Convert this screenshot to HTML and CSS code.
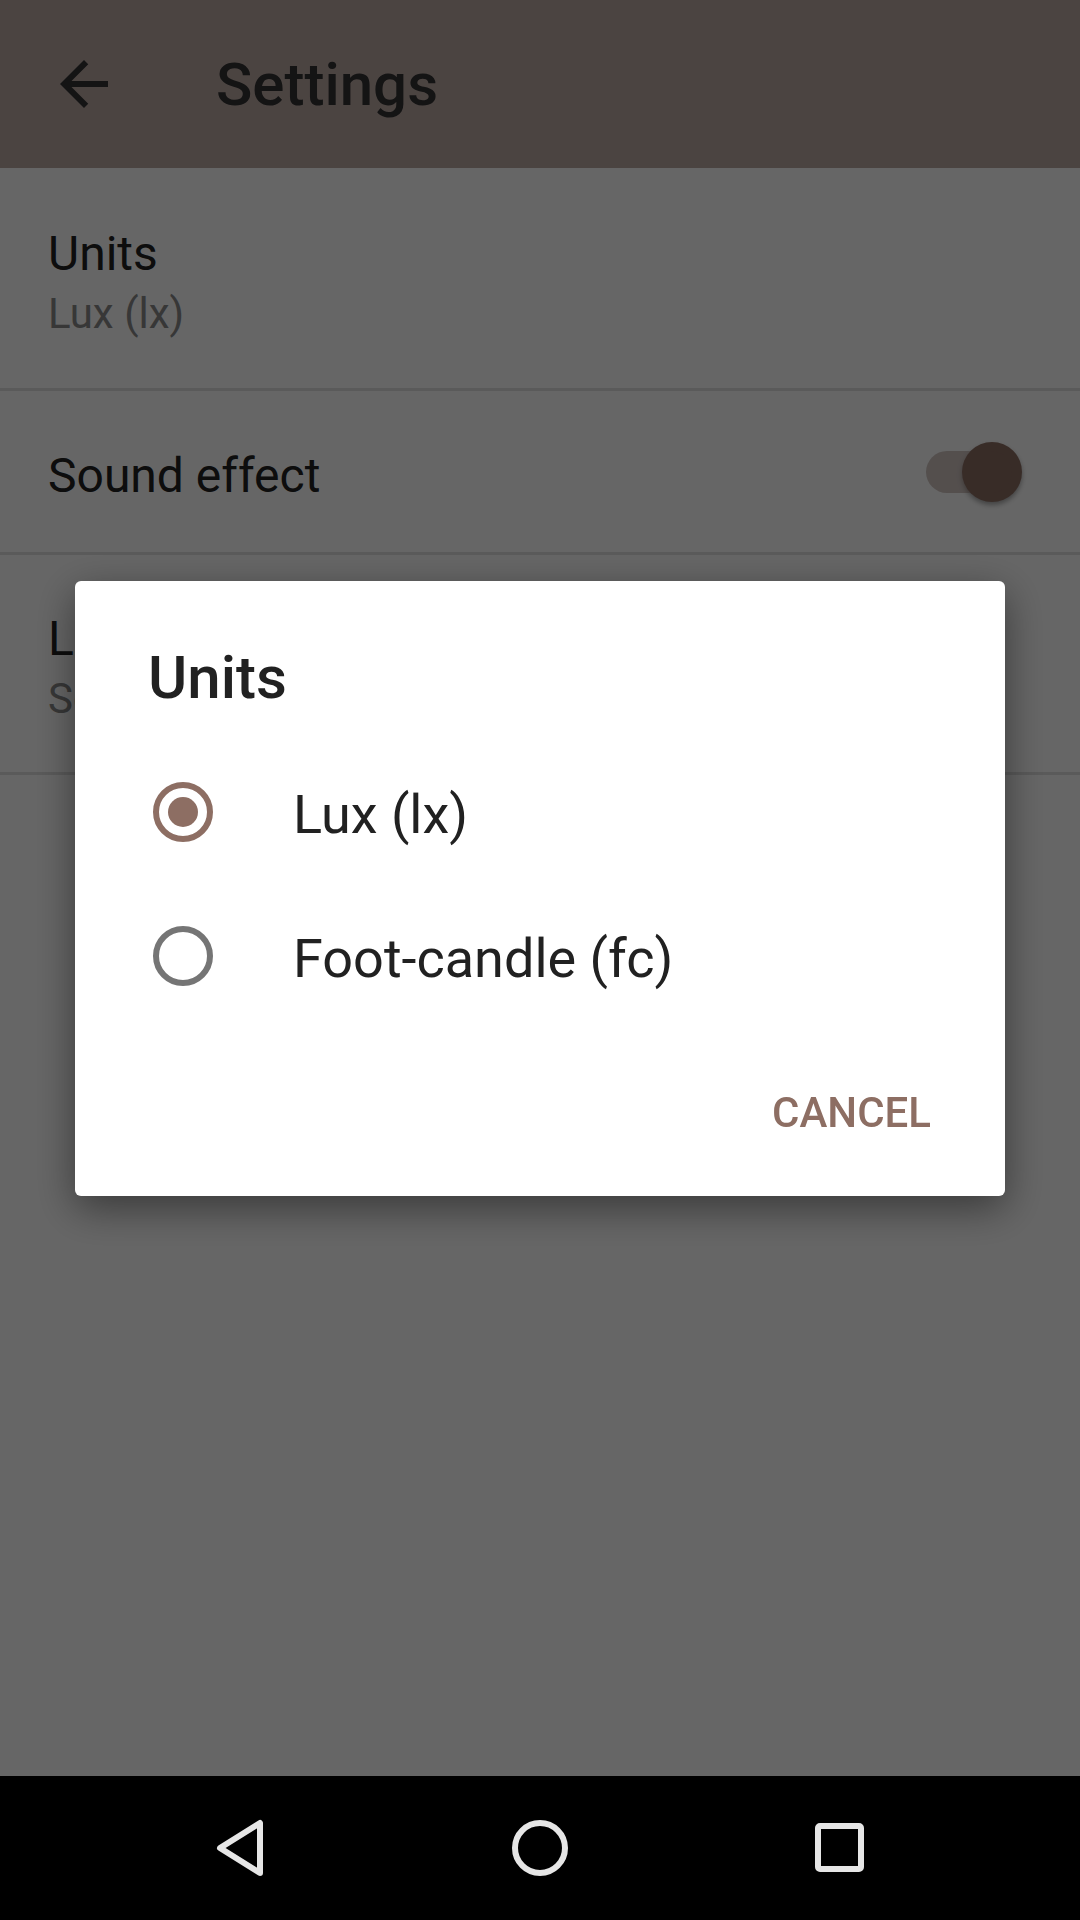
FILE: index.html
```html
<!DOCTYPE html>
<html lang="en">
<head>
    <meta charset="UTF-8">
    <meta name="viewport" content="width=device-width, initial-scale=1.0">
    <title>Settings</title>
    <link rel="stylesheet" href="styles.css">
</head>
<body>
    <div class="screen">
        <header class="appbar">
            <svg class="appbar-back" viewBox="0 0 24 24"><path d="M20 11H7.83l5.59-5.59L12 4l-8 8 8 8 1.41-1.41L7.83 13H20v-2z"/></svg>
            <h1 class="appbar-title">Settings</h1>
        </header>
        <main class="prefs">
            <div class="pref pref-units">
                <div class="pref-title">Units</div>
                <div class="pref-summary">Lux (lx)</div>
            </div>
            <div class="pref pref-sound">
                <div class="pref-title">Sound effect</div>
                <div class="switch">
                    <span class="switch-track"></span>
                    <span class="switch-thumb"></span>
                </div>
            </div>
            <div class="pref pref-light">
                <div class="pref-title">Light sensor</div>
                <div class="pref-summary">Sensor default</div>
            </div>
        </main>
        <nav class="navbar">
            <div class="navbar-item">
                <svg viewBox="0 0 72 72"><path d="M16 36 L56 11 L56 61 Z"/></svg>
            </div>
            <div class="navbar-item">
                <svg viewBox="0 0 72 72"><circle cx="36" cy="36" r="25"/></svg>
            </div>
            <div class="navbar-item">
                <svg viewBox="0 0 72 72"><rect x="14" y="14" width="43" height="43" rx="2"/></svg>
            </div>
        </nav>
    </div>

    <div class="scrim">
        <section class="dialog">
            <h2 class="dialog-title">Units</h2>
            <div class="dialog-options">
                <div class="option">
                    <span class="radio radio-checked"></span>
                    <span class="option-label">Lux (lx)</span>
                </div>
                <div class="option">
                    <span class="radio"></span>
                    <span class="option-label">Foot-candle (fc)</span>
                </div>
            </div>
            <div class="dialog-actions">
                <span class="dialog-button">Cancel</span>
            </div>
        </section>
    </div>
</body>
</html>
```

FILE: styles.css
```css
* {
    padding: 0px;
    margin: 0px;
    box-sizing: border-box;
    font-family: Roboto, "Liberation Sans", sans-serif;
}
:root {
    --brown: #8D6E63;
    --brown-light: #BCAAA4;
    --text: #212121;
    --text-secondary: #8a8a8a;
    --divider: #e0e0e0;
}
body {
    width: 1080px;
    height: 1920px;
    overflow: hidden;
    background-color: #ffffff;
}
.screen {
    height: 1920px;
    display: flex;
    flex-direction: column;
}

/* app bar */
.appbar {
    height: 168px;
    display: flex;
    align-items: center;
    background-color: var(--brown-light);
}
.appbar-back {
    width: 72px;
    height: 72px;
    margin-left: 48px;
    fill: #323232;
}
.appbar-title {
    margin-left: 96px;
    font-size: 60px;
    font-weight: 500;
    color: #323232;
}

/* preference list */
.prefs {
    flex: 1;
    background-color: #ffffff;
}
.pref {
    padding-left: 48px;
    border-bottom: 3px solid var(--divider);
}
.pref-title {
    font-size: 48px;
    line-height: 64px;
    color: var(--text);
}
.pref-summary {
    font-size: 42px;
    line-height: 56px;
    color: var(--text-secondary);
}
.pref-units {
    height: 223px;
    padding-top: 54px;
}
.pref-sound {
    height: 164px;
    display: flex;
    align-items: center;
    justify-content: space-between;
    padding-right: 58px;
}
.pref-sound .pref-title {
    margin-top: 8px;
}
.pref-light {
    height: 220px;
    padding-top: 52px;
}
.switch {
    display: flex;
    align-items: center;
}
.switch-track {
    width: 86px;
    height: 42px;
    border-radius: 21px;
    background-color: var(--brown);
    opacity: 0.4;
}
.switch-thumb {
    width: 60px;
    height: 60px;
    margin-left: -50px;
    border-radius: 50%;
    background-color: var(--brown);
    box-shadow: 0 3px 5px rgba(0, 0, 0, 0.35);
}

/* navigation bar */
.navbar {
    height: 144px;
    display: flex;
    padding: 0 90px;
    background-color: #000000;
}
.navbar-item {
    flex: 1;
    display: flex;
    align-items: center;
    justify-content: center;
}
.navbar-item svg {
    width: 72px;
    height: 72px;
    fill: none;
    stroke: #e6e6e6;
    stroke-width: 6;
    stroke-linejoin: round;
}

/* dialog */
.scrim {
    position: fixed;
    top: 0;
    left: 0;
    right: 0;
    bottom: 144px;
    display: flex;
    align-items: center;
    justify-content: center;
    background-color: rgba(0, 0, 0, 0.6);
}
.dialog {
    width: 930px;
    height: 615px;
    padding-top: 57px;
    display: flex;
    flex-direction: column;
    border-radius: 6px;
    background-color: #ffffff;
    box-shadow: 0 12px 40px rgba(0, 0, 0, 0.45);
}
.dialog-title {
    padding-left: 73px;
    font-size: 60px;
    line-height: 80px;
    font-weight: 500;
    color: var(--text);
}
.dialog-options {
    margin-top: 22px;
}
.option {
    height: 144px;
    display: flex;
    align-items: center;
    padding-left: 78px;
}
.radio {
    width: 60px;
    height: 60px;
    border-radius: 50%;
    border: 6px solid #757575;
    display: flex;
    align-items: center;
    justify-content: center;
}
.radio-checked {
    border-color: var(--brown);
}
.radio-checked::after {
    content: "";
    width: 30px;
    height: 30px;
    border-radius: 50%;
    background-color: var(--brown);
}
.option-label {
    margin-left: 80px;
    padding-top: 6px;
    font-size: 54px;
    line-height: 64px;
    color: var(--text);
}
.dialog-actions {
    margin-top: auto;
    display: flex;
    justify-content: flex-end;
    padding: 0 74px 59px 0;
}
.dialog-button {
    font-size: 42px;
    line-height: 48px;
    font-weight: 500;
    text-transform: uppercase;
    color: var(--brown);
}
```
